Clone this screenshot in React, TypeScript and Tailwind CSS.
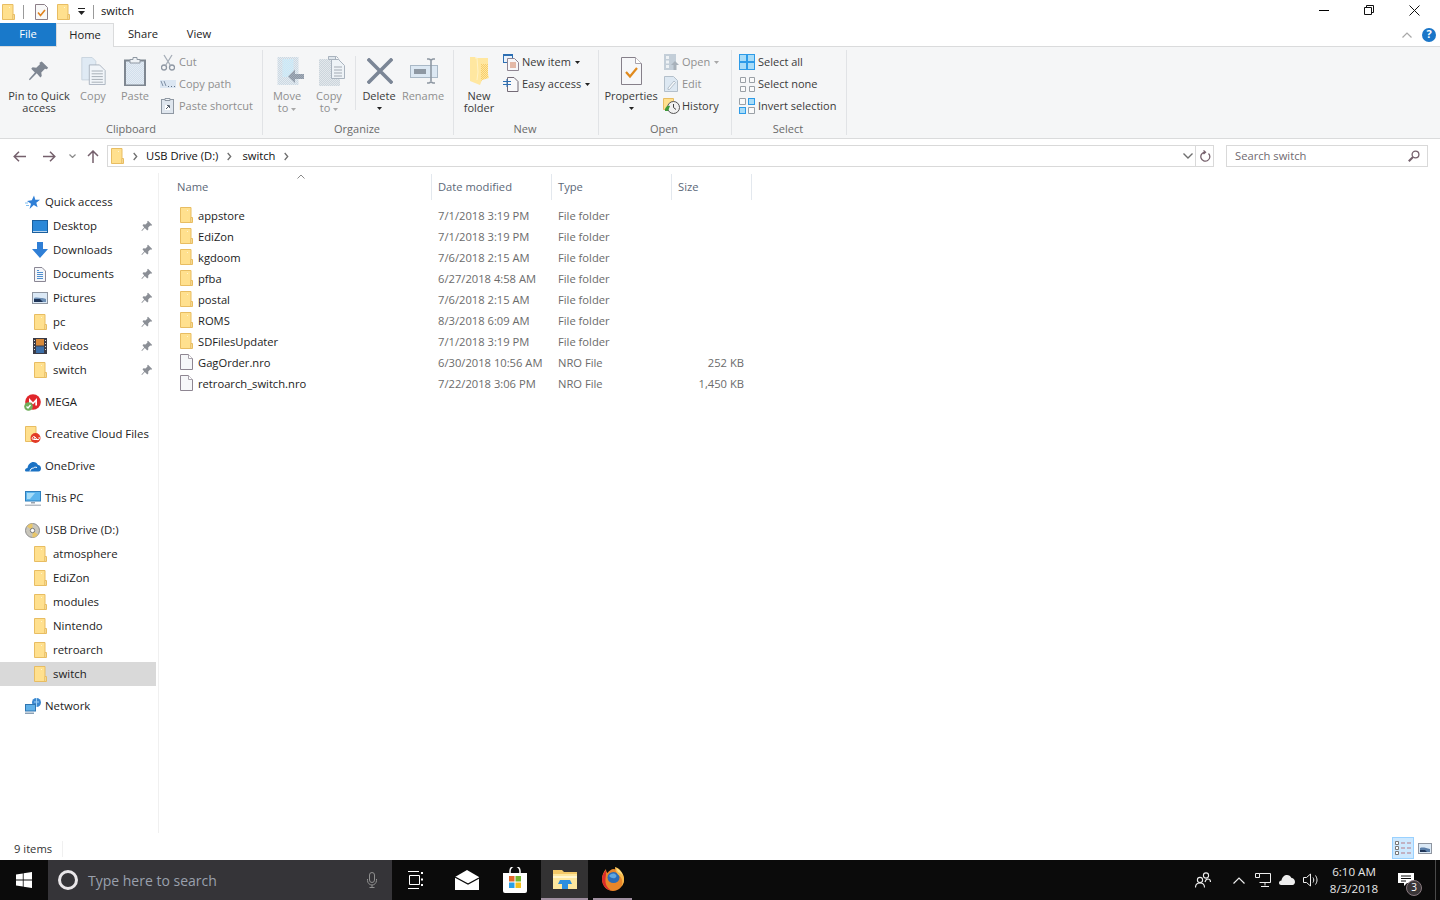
import React from "react";

type C = { children?: React.ReactNode };

function Folder() {
  return (
    <svg width="13" height="16" viewBox="0 0 13 16" className="shrink-0">
      <path d="M.5.500h10.500v15H.5z" fill="#ffe08e" stroke="#e8bd62" />
      <path d="M11 10.500h1.500v5H11z" fill="#fff0c0" stroke="#e8bd62" />
      <path d="M7 3h1v1H7z" fill="#fff4d0" />
    </svg>
  );
}
function FileIc() {
  return (
    <svg width="13" height="16" viewBox="0 0 13 16" className="shrink-0">
      <path d="M.5.500h8l4 4v11H.5z" fill="#f6f7f9" stroke="#8e8692" />
      <path d="M8.500.5v4h4" fill="#fff" stroke="#a8a3ac" />
    </svg>
  );
}
function PinSmall() {
  return (
    <svg width="12" height="12" viewBox="0 0 12 12">
      <path d="M7 .8 11.200 5l-1 .8-1-.3-2 2 .1 2-1 1L3.800 8 1 11l-.6-.5L3.200 7.600 1.500 5.200l1-1 2 .2 2-2-.3-1z" fill="#8b8f96" />
    </svg>
  );
}
function Star() {
  return (
    <svg width="15" height="15" viewBox="0 0 15 15">
      <path d="M9 .5l1.300 4.300H15l-3.700 2.900 1.300 4.500L8.800 10l-4.300 4 1.500-5.200L2 6l4.800-.8z" fill="#2f7fd6" />
      <path d="M0 8h3M1 10.500h3" stroke="#7fbdf0" />
    </svg>
  );
}
function Desktop() {
  return (
    <svg width="16" height="13" viewBox="0 0 16 13">
      <rect x=".5" y=".5" width="15" height="12" fill="#2b88d8" stroke="#1a5f9e" />
      <path d="M1 11h14v1H1z" fill="#bcd6ee" />
    </svg>
  );
}
function Downloads() {
  return (
    <svg width="16" height="16" viewBox="0 0 16 16">
      <path d="M5 0h6v7h5l-8 9-8-9h5z" fill="#2f7fd6" />
    </svg>
  );
}
function Documents() {
  return (
    <svg width="12" height="15" viewBox="0 0 12 15">
      <path d="M.5.500h7.500l3.500 3.500v10.500H.5z" fill="#f4f6f9" stroke="#8b8794" />
      <path d="M3 5.500h6M3 7.500h6M3 9.500h6M3 11.500h6" stroke="#4f8fd0" />
      <path d="M3 3h2v1H3z" fill="#4f8fd0" />
    </svg>
  );
}
function Pictures() {
  return (
    <svg width="16" height="12" viewBox="0 0 16 12">
      <rect x=".5" y=".5" width="15" height="11" fill="#dbe9f6" stroke="#8e95a0" />
      <path d="M2 6c3-1 5 0 7 0s3 0 5 1v3H2z" fill="#6d8fb5" />
      <path d="M2 7h6l3 3H2z" fill="#1f3558" />
    </svg>
  );
}
function Videos() {
  return (
    <svg width="14" height="16" viewBox="0 0 14 16">
      <rect width="14" height="16" fill="#3b3b46" />
      <path d="M3 1h8v6.500H3z" fill="#d88a3a" />
      <path d="M3 8.500h8V15H3z" fill="#3d6fa8" />
      <path d="M1 2h1v1H1zM1 5h1v1H1zM1 8h1v1H1zM1 11h1v1H1zM12 2h1v1h-1zM12 5h1v1h-1zM12 8h1v1h-1zM12 11h1v1h-1z" fill="#ddd" />
    </svg>
  );
}
function Mega() {
  return (
    <svg width="17" height="17" viewBox="0 0 17 17">
      <circle cx="9" cy="8" r="7.800" fill="#e0262b" />
      <path d="M5 11.500V4l4 4.200L13 4v7.500h-1.700V8L9 10.500 6.700 8v3.500z" fill="#fff" />
      <circle cx="4.500" cy="12.500" r="4.300" fill="#6fae5b" />
      <path d="M2.500 12.500l1.500 1.500 2.500-3" stroke="#fff" strokeWidth="1.300" fill="none" />
    </svg>
  );
}
function Cc() {
  return (
    <svg width="16" height="17" viewBox="0 0 16 17">
      <path d="M.5.500h10.500v15H.5z" fill="#ffe08e" stroke="#e8bd62" />
      <circle cx="10.500" cy="12" r="5" fill="#e23a26" />
      <path d="M7.500 13.500c-1-2 1-4 2.500-2.500l2 2.500c1.500 1 3-1 2-2.500M10 11l-1.500 2.500h5" stroke="#fff" fill="none" />
    </svg>
  );
}
function OneDrive() {
  return (
    <svg width="16" height="11" viewBox="0 0 16 11">
      <path d="M0 9.500C0 8 1 7 2.500 7 3 3.500 5.500 1 8.500 1c2 0 3.500 1 4.500 3 1.700 0 3 1.500 3 3.500 0 1.500-.8 3-2.500 3H1.500C.5 10.500 0 10 0 9.500z" fill="#1b72c4" />
      <path d="M5 10.500c0-2 1.500-3.500 3.500-3.500 1-1 2-1 3.500-.5" stroke="#fff" fill="none" />
    </svg>
  );
}
function ThisPc() {
  return (
    <svg width="16" height="15" viewBox="0 0 16 15">
      <rect x=".5" y=".5" width="15" height="9.500" fill="#5cb5ee" stroke="#2f7fbc" />
      <path d="M2 2h8L5 8H2z" fill="#a6dcf8" />
      <path d="M6 11h4v1.500H6z" fill="#9aa3ad" />
      <path d="M0 13.500h16V15H0z" fill="#b6bcc4" />
    </svg>
  );
}
function Usb() {
  return (
    <svg width="15" height="15" viewBox="0 0 15 15">
      <circle cx="7.500" cy="7.500" r="7" fill="#c9c6bb" stroke="#8d8d8d" />
      <path d="M7.500 7.500L2 3.500A7 7 0 0 1 7.500.5zM7.500 7.500l5.500 4A7 7 0 0 1 7.500 14.500z" fill="#e8c66a" />
      <circle cx="7.500" cy="7.500" r="2.200" fill="#fff" stroke="#777" />
    </svg>
  );
}
function Network() {
  return (
    <svg width="16" height="16" viewBox="0 0 16 16">
      <circle cx="11.500" cy="4.500" r="4.500" fill="#3a87cf" />
      <path d="M9 4h5M11.500 0v9" stroke="#9ed0f5" />
      <rect x=".5" y="6.500" width="10" height="6.500" fill="#5fb0e8" stroke="#2f75b0" />
      <path d="M0 14.500h9V16H0z" fill="#8aa0b5" />
    </svg>
  );
}

function Chev({ className }: { className?: string }) {
  return (
    <svg width="5" height="9" viewBox="0 0 5 9" className={className}>
      <path d="M.7 1l3 3.500-3 3.500" stroke="#6f6f6f" strokeWidth="1.300" fill="none" />
    </svg>
  );
}
function Caret({ gray }: { gray?: boolean }) {
  return (
    <svg width="5" height="3" viewBox="0 0 5 3" className="inline-block align-middle">
      <path d="M0 0h5L2.500 3z" fill={gray ? "#a8a8a8" : "#222"} />
    </svg>
  );
}

/* ribbon icons */
const Dither = ({ c1, c2, id }: { c1: string; c2: string; id: string }) => (
  <defs>
    <pattern id={id} width="2" height="2" patternUnits="userSpaceOnUse">
      <rect width="2" height="2" fill={c1} />
      <rect width="1" height="1" fill={c2} />
      <rect x="1" y="1" width="1" height="1" fill={c2} />
    </pattern>
  </defs>
);
function PinBig() {
  return (
    <svg width="22" height="22" viewBox="0 0 24 24">
      <path d="M15 1.500 22 8.500l-1.500 1.500-2-.5-4 4 .5 4-1.500 1.500-4-4.500L2 22l-1-1 6.500-7.500-4-4L5 8l4 .5 4-4-.5-1.500z" fill="#7e8692" />
    </svg>
  );
}
function CopyBig() {
  return (
    <svg width="25" height="28" viewBox="0 0 26 30">
      <path d="M.5.500h11l4 4v20H.5z" fill="#dfeaf4" stroke="#c6d2dd" />
      <path d="M8.500 8.500h11l6 6v15h-17z" fill="#f1f5f9" stroke="#a9b3be" />
      <path d="M11 15h12M11 18h12M11 21h12M11 24h12M11 27h12" stroke="#a3aab3" />
    </svg>
  );
}
function PasteBig() {
  return (
    <svg width="22" height="29" viewBox="0 0 22 29">
      <Dither id="pa" c1="#e4ecf4" c2="#d2dfec" />
      <rect x="1" y="3.500" width="20" height="25" fill="url(#pa)" stroke="#7f8791" strokeWidth="2" />
      <path d="M6 2.500h3V.5h4v2h3v3.500H6z" fill="#eef2f6" stroke="#8f98a3" />
    </svg>
  );
}
function Scissors() {
  return (
    <svg width="14" height="17" viewBox="0 0 14 17" className="ml-[1px]">
      <circle cx="3" cy="13.500" r="2.500" fill="none" stroke="#8e97a3" strokeWidth="1.300" />
      <circle cx="11" cy="13.500" r="2.500" fill="none" stroke="#8e97a3" strokeWidth="1.300" />
      <path d="M4.500 11.500 11 1M9.500 11.500 3 1" stroke="#a6aeb8" strokeWidth="1.300" />
    </svg>
  );
}
function CopyPath() {
  return (
    <svg width="16" height="8" viewBox="0 0 16 8">
      <rect width="16" height="8" fill="#dbe6f2" />
      <path d="M1 1l2 5M4 1l2 5" stroke="#7f90a6" />
      <path d="M8 6h1v1H8zM11 6h1v1h-1zM14 6h1v1h-1z" fill="#5f6f84" />
    </svg>
  );
}
function PasteShort() {
  return (
    <svg width="13" height="16" viewBox="0 0 13 16" className="ml-[1px]">
      <rect x=".5" y="1.500" width="12" height="14" fill="#dfe6ee" stroke="#8f98a3" />
      <path d="M4 .5h5v2H4z" fill="#eef2f6" stroke="#8f98a3" />
      <path d="M4 7h5v5H4z" fill="#fff" />
      <path d="M5 11l3-3M6 7.500h2.500V10" stroke="#56606c" fill="none" />
    </svg>
  );
}
function MoveTo() {
  return (
    <svg width="33" height="30" viewBox="0 0 33 30">
      <Dither id="mv" c1="#e3ebf1" c2="#ccd8e2" />
      <Dither id="mvc" c1="#c4e9fa" c2="#dbe8f0" />
      <Dither id="mva" c1="#8d98a6" c2="#a3adb9" />
      <rect x="6.500" y="1" width="21" height="28" fill="url(#mv)" />
      <rect x="11.500" y="3" width="11" height="18" fill="url(#mvc)" />
      <path d="M17 21.500 24 14.500v4.500h9v5h-9V28z" fill="url(#mva)" transform="translate(0 -1)" />
    </svg>
  );
}
function CopyTo() {
  return (
    <svg width="32" height="30" viewBox="0 0 32 30">
      <Dither id="ct" c1="#e3e8ec" c2="#ccd5dc" />
      <rect x="6" y="3" width="21" height="27" fill="url(#ct)" />
      <path d="M15.500.5h8l2 2" fill="none" stroke="#a9b3be" />
      <path d="M15.500.5h7v3H15.500z" fill="#dfe6ec" stroke="#a9b3be" />
      <path d="M18.500 3.500h7l6 6v13h-13z" fill="#eef3f7" stroke="#a9b3be" />
      <path d="M21 11h8M21 14h8M21 17h8M21 20h8" stroke="#a3aab3" />
    </svg>
  );
}
function DeleteIc() {
  return (
    <svg width="26" height="26" viewBox="0 0 26 26" className="ml-[1px]">
      <path d="M2 2l22 22M24 2 2 24" stroke="#7b8696" strokeWidth="3.600" strokeLinecap="square" />
    </svg>
  );
}
function RenameIc() {
  return (
    <svg width="28" height="26" viewBox="0 0 28 26" className="ml-[2px]">
      <rect x=".5" y="7.500" width="27" height="12" fill="#dce8f3" stroke="#a9b8c6" />
      <rect x="4" y="11" width="12" height="5" fill="#8e98a3" />
      <path d="M17 1h2l2 1 2-1h2M21 2v21M17 25h2l2-1 2 1h2" stroke="#8e98a3" strokeWidth="1.600" fill="none" />
    </svg>
  );
}
function NewFolderIc() {
  return (
    <svg width="19" height="28" viewBox="0 0 19 28">
      <Dither id="nf" c1="#ffe79f" c2="#f7cd6c" />
      <path d="M0 0h5l1 1h12v16l1 4-7 2-2 5L0 24z" fill="#ffe7a0" />
      <path d="M5 1h2l1 14-1 8" stroke="#fff3c8" fill="none" />
      <path d="M11 7h7v14l-6 2-1 1z" fill="url(#nf)" />
    </svg>
  );
}
function NewItem() {
  return (
    <svg width="16" height="17" viewBox="0 0 16 17">
      <rect x=".5" y=".5" width="9" height="8" fill="#eaf2fa" stroke="#2d6fb3" />
      <path d="M0 0h10v2H0z" fill="#2d6fb3" />
      <path d="M4.500 4.500h7l4 4v8h-11z" fill="#f7f7f9" stroke="#8f8592" />
      <path d="M7 9h6M7 11h6M7 13h6" stroke="#d07a55" />
    </svg>
  );
}
function EasyAccess() {
  return (
    <svg width="16" height="16" viewBox="0 0 16 16">
      <path d="M4.500 1.500h6.500l4 4v10H4.500z" fill="#f8f8fa" stroke="#736a76" />
      <path d="M0 5.500h8M0 8.500h8" stroke="#2d6fb3" />
      <path d="M4 3v8" stroke="#2d6fb3" />
    </svg>
  );
}
function Properties() {
  return (
    <svg width="21" height="28" viewBox="0 0 21 28">
      <path d="M.5.500h14l6 6v21H.5z" fill="#f6f7f9" stroke="#86808a" />
      <path d="M14.500.5v6h6" fill="#fff" stroke="#a8a3ac" />
      <path d="M5 15l4 4.500L16 11" stroke="#e08a1e" strokeWidth="2.200" fill="none" />
    </svg>
  );
}
function OpenIc() {
  return (
    <svg width="15" height="16" viewBox="0 0 15 16" className="ml-[1px]">
      <rect width="12" height="16" fill="#c3ced8" />
      <path d="M2 2h3v3H2zM2 6.500h3v3H2zM2 11h3v3H2z" fill="#eef2f5" />
      <path d="M11 7l4 4h-2.500v5h-3v-5H7z" fill="#a8b1ba" />
    </svg>
  );
}
function EditIc() {
  return (
    <svg width="14" height="16" viewBox="0 0 14 16" className="ml-[1px]">
      <path d="M.5.500h9l4 4v11H.5z" fill="#dde8f2" stroke="#b3bfca" />
      <path d="M4 12l6-7 1.500 1.500-6 7H4z" fill="#f6f9fb" stroke="#b3bfca" />
    </svg>
  );
}
function HistoryIc() {
  return (
    <svg width="17" height="16" viewBox="0 0 17 16">
      <path d="M.5.500h10v11H.5z" fill="#ffe08e" stroke="#e8bd62" />
      <circle cx="10.500" cy="9.500" r="6" fill="#f1f1f1" stroke="#555" />
      <path d="M10.500 6v3.500l2.500 2" stroke="#444" fill="none" />
      <path d="M2 11c1-3 3-4 5-3L5 13H2z" fill="#3f9a3a" />
    </svg>
  );
}
function SelectAll() {
  return (
    <svg width="16" height="16" viewBox="0 0 16 16">
      <rect width="16" height="16" fill="#2d9be8" />
      <path d="M1 1h6v6H1zM9 1h6v6H9zM1 9h6v6H1zM9 9h6v6H9z" fill="#a8dcf8" />
    </svg>
  );
}
function SelectNone() {
  return (
    <svg width="15" height="15" viewBox="0 0 15 15" fill="#fafafa" stroke="#9aa0a6" className="ml-[1px]">
      <path d="M.5.500h5v5h-5zM9.500.500h5v5h-5zM.5 9.500h5v5h-5zM9.500 9.500h5v5h-5z" />
    </svg>
  );
}
function Invert() {
  return (
    <svg width="16" height="16" viewBox="0 0 16 16">
      <path d="M.5.500h6v6h-6zM9.500 9.500h6v6h-6z" fill="#fafafa" stroke="#9aa0a6" />
      <path d="M9 0h7v7H9zM0 9h7v7H0z" fill="#2d9be8" />
      <path d="M10 1h5v5h-5zM1 10h5v5H1z" fill="#a8dcf8" />
    </svg>
  );
}

function Big({ w, icon, l1, l2, gray, caret, ml }: { w: string; icon: React.ReactNode; l1: string; l2?: React.ReactNode; gray?: boolean; caret?: boolean; ml?: string }) {
  return (
    <div className={`flex shrink-0 flex-col items-center pt-[5px] leading-[12px] ${w} ${ml ?? ""} ${gray ? "text-[#8f8f8f]" : "text-[#3a3a3a]"}`}>
      <div className="flex h-[32px] items-center justify-center">{icon}</div>
      <div className="mt-[3px] whitespace-nowrap">{l1}</div>
      {l2 !== undefined && <div className="whitespace-nowrap">{l2}</div>}
      {caret && (
        <div className="flex h-[12px] items-center">
          <Caret />
        </div>
      )}
    </div>
  );
}
function Small({ icon, label, gray, caret }: { icon: React.ReactNode; label: string; gray?: boolean; caret?: boolean }) {
  return (
    <div className={`flex h-[22px] items-center whitespace-nowrap ${gray ? "text-[#8f8f8f]" : "text-[#3a3a3a]"}`}>
      <div className="flex w-[19px] shrink-0 items-center">{icon}</div>
      <span>{label}</span>
      {caret && (
        <span className="ml-[4px] flex items-center">
          <Caret gray={gray} />
        </span>
      )}
    </div>
  );
}
function Col({ children, ml }: C & { ml: string }) {
  return <div className={`flex flex-col pt-[1px] ${ml}`}>{children}</div>;
}
function Group({ w, label, lc, children }: C & { w: string; label: string; lc?: string }) {
  return (
    <div className={`flex shrink-0 flex-col border-r border-[#e1e3e6] ${w}`}>
      <div className="flex h-[73px]">{children}</div>
      <div className={`text-center leading-[12px] text-[#6a6a6a] ${lc ?? ""}`}>{label}</div>
    </div>
  );
}

function NavRow({ icon, label, sub, pin, sel, mt }: { icon: React.ReactNode; label: string; sub?: boolean; pin?: boolean; sel?: boolean; mt?: boolean }) {
  return (
    <div className={`flex h-[24px] w-[156px] items-center whitespace-nowrap text-[#1c1c1c] ${sub ? "pl-[32px]" : "pl-[23px]"} ${sel ? "bg-[#d9d9d9]" : ""} ${mt ? "mt-[8px]" : ""}`}>
      <div className={`flex shrink-0 items-center justify-center ${sub ? "w-[21px] pr-[5px]" : "w-[22px] pr-[3px]"}`}>{icon}</div>
      <span className="flex-1">{label}</span>
      {pin && (
        <span className="mr-[3px] flex items-center">
          <PinSmall />
        </span>
      )}
    </div>
  );
}

const files = [
  ["appstore", "7/1/2018 3:19 PM", "File folder", ""],
  ["EdiZon", "7/1/2018 3:19 PM", "File folder", ""],
  ["kgdoom", "7/6/2018 2:15 AM", "File folder", ""],
  ["pfba", "6/27/2018 4:58 AM", "File folder", ""],
  ["postal", "7/6/2018 2:15 AM", "File folder", ""],
  ["ROMS", "8/3/2018 6:09 AM", "File folder", ""],
  ["SDFilesUpdater", "7/1/2018 3:19 PM", "File folder", ""],
  ["GagOrder.nro", "6/30/2018 10:56 AM", "NRO File", "252 KB"],
  ["retroarch_switch.nro", "7/22/2018 3:06 PM", "NRO File", "1,450 KB"],
];

function Tb({ children, w, bg, line, ml }: C & { w: string; bg?: string; line?: string; ml?: string }) {
  return (
    <div className={`flex h-full flex-col ${w} ${bg ?? ""} ${ml ?? ""}`}>
      <div className="flex flex-1 items-center justify-center">{children}</div>
      {line && <div className={`h-[2px] bg-[#a08fa0] ${line}`} />}
    </div>
  );
}

export default function App() {
  return (
    <div className="flex h-[900px] w-[1440px] flex-col overflow-hidden bg-white font-['Open_Sans',sans-serif] text-[11.2px] text-[#1c1c1c]">
      {/* title bar */}
      <div className="flex h-[23px] shrink-0 items-center">
        <div className="ml-[2px] flex items-center"><Folder /></div>
        <div className="ml-[8px] h-[14px] w-px bg-[#9a9a9a]" />
        <div className="ml-[11px] flex items-center">
          <svg width="13" height="16" viewBox="0 0 13 16">
            <path d="M.5.500h9l3 3v12H.5z" fill="#f8f8f8" stroke="#8c7f88" />
            <path d="M3 8.500l2.500 3L10 6" stroke="#e0821e" strokeWidth="1.600" fill="none" />
          </svg>
        </div>
        <div className="ml-[9px] flex items-center"><Folder /></div>
        <div className="ml-[8px] flex flex-col items-center">
          <div className="mb-[2px] h-px w-[7px] bg-[#222]" />
          <svg width="7" height="4" viewBox="0 0 7 4"><path d="M0 0h7L3.500 4z" fill="#222" /></svg>
        </div>
        <div className="ml-[8px] h-[14px] w-px bg-[#9a9a9a]" />
        <div className="ml-[7px] text-[#111]">switch</div>
        <div className="flex-1" />
        <div className="flex h-full w-[45px] items-center justify-center pb-[3px]"><div className="h-px w-[10px] bg-black" /></div>
        <div className="flex h-full w-[45px] items-center justify-center pb-[3px]">
          <svg width="10" height="10" viewBox="0 0 10 10" fill="none" stroke="#111">
            <path d="M.5 2.500h7v7h-7zM2.500 2.500v-2h7v7h-2" />
          </svg>
        </div>
        <div className="flex h-full w-[46px] items-center justify-center pb-[3px]">
          <svg width="11" height="11" viewBox="0 0 11 11" stroke="#111"><path d="M.5.500l10 10M10.500.5l-10 10" /></svg>
        </div>
        <div className="w-[3px]" />
      </div>
      {/* tabs */}
      <div className="flex h-[24px] shrink-0 items-start border-b border-[#dadbdc]">
        <div className="flex h-[23px] w-[56px] items-center justify-center bg-[#1979ca] text-white">File</div>
        <div className="z-10 flex h-[24px] w-[58px] items-center justify-center border-x border-t border-[#dadbdc] bg-[#f5f6f7] text-[#222]">Home</div>
        <div className="flex h-[23px] w-[58px] items-center justify-center text-[#222]">Share</div>
        <div className="flex h-[23px] w-[54px] items-center justify-center text-[#222]">View</div>
        <div className="flex-1" />
        <div className="flex h-[23px] items-center">
          <svg width="10" height="6" viewBox="0 0 10 6" fill="none" stroke="#a8a8a8" strokeWidth="1.200"><path d="M.5 5.500 5 1l4.500 4.500" /></svg>
          <div className="ml-[10px] mr-[4px] flex h-[14px] w-[14px] items-center justify-center rounded-full bg-[#1b76c8] text-[11px] font-bold text-white">?</div>
        </div>
      </div>
      {/* ribbon */}
      <div className="flex h-[92px] shrink-0 items-stretch border-b border-[#dadbdc] bg-[#f5f6f7] py-[3px] text-[11px]">
        <Group w="w-[263px]" label="Clipboard">
          <Big w="w-[78px]" icon={<PinBig />} l1="Pin to Quick" l2="access" />
          <Big w="w-[30px]" icon={<CopyBig />} l1="Copy" gray />
          <Big w="w-[42px]" ml="ml-[6px]" icon={<PasteBig />} l1="Paste" gray />
          <Col ml="ml-[4px]">
            <Small gray icon={<Scissors />} label="Cut" />
            <Small gray icon={<CopyPath />} label="Copy path" />
            <Small gray icon={<PasteShort />} label="Paste shortcut" />
          </Col>
        </Group>
        <Group w="w-[191px]" label="Organize" lc="pr-[2px]">
          <Big w="w-[36px]" ml="ml-[6px]" icon={<MoveTo />} l1="Move" l2={<>to <Caret gray /></>} gray />
          <Big w="w-[36px]" ml="ml-[6px]" icon={<CopyTo />} l1="Copy" l2={<>to <Caret gray /></>} gray />
          <div className="ml-[8px] mt-[6px] h-[54px] w-px bg-[#e1e3e6]" />
          <Big w="w-[40px]" ml="ml-[3px]" icon={<DeleteIc />} l1="Delete" caret />
          <Big w="w-[44px]" ml="ml-[2px]" icon={<RenameIc />} l1="Rename" gray />
        </Group>
        <Group w="w-[145px]" label="New" lc="pr-[2px]">
          <Big w="w-[36px]" ml="ml-[7px]" icon={<NewFolderIc />} l1="New" l2="folder" />
          <Col ml="ml-[6px]">
            <Small icon={<NewItem />} label="New item" caret />
            <Small icon={<EasyAccess />} label="Easy access" caret />
          </Col>
        </Group>
        <Group w="w-[133px]" label="Open" lc="pr-[2px]">
          <Big w="w-[54px]" ml="ml-[5px]" icon={<Properties />} l1="Properties" caret />
          <Col ml="ml-[5px]">
            <Small gray icon={<OpenIc />} label="Open" caret />
            <Small gray icon={<EditIc />} label="Edit" />
            <Small icon={<HistoryIc />} label="History" />
          </Col>
        </Group>
        <Group w="w-[115px]" label="Select" lc="pr-[2px]">
          <Col ml="ml-[7px]">
            <Small icon={<SelectAll />} label="Select all" />
            <Small icon={<SelectNone />} label="Select none" />
            <Small icon={<Invert />} label="Invert selection" />
          </Col>
        </Group>
      </div>
      {/* address */}
      <div className="flex h-[34px] shrink-0 items-center">
        <div className="flex w-[34px] items-center justify-center pl-[4px]">
          <svg width="13" height="11" viewBox="0 0 13 11" fill="none" stroke="#75606c" strokeWidth="1.500"><path d="M13 5.500H1.500M6 .7 1.200 5.500 6 10.300" /></svg>
        </div>
        <div className="flex w-[30px] items-center justify-center">
          <svg width="13" height="11" viewBox="0 0 13 11" fill="none" stroke="#75606c" strokeWidth="1.500"><path d="M0 5.500h11.500M7 .7l4.800 4.800L7 10.300" /></svg>
        </div>
        <div className="flex w-[16px] items-center justify-center">
          <svg width="7" height="4" viewBox="0 0 7 4" fill="none" stroke="#8a8a8a" strokeWidth="1.200"><path d="M.5.500l3 3 3-3" /></svg>
        </div>
        <div className="flex w-[26px] items-center justify-center">
          <svg width="12" height="13" viewBox="0 0 12 13" fill="none" stroke="#75606c" strokeWidth="1.500"><path d="M6 13V1.500M1 6l5-5 5 5" /></svg>
        </div>
        <div className="ml-[1px] flex h-[22px] flex-1 items-center border border-[#d9d9d9] pl-[3px]">
          <Folder />
          <Chev className="ml-[9px]" />
          <span className="ml-[8px] text-[#111]">USB Drive (D:)</span>
          <Chev className="ml-[9px]" />
          <span className="ml-[10px] text-[#111]">switch</span>
          <Chev className="ml-[9px]" />
          <div className="flex-1" />
          <svg width="10" height="6" viewBox="0 0 10 6" fill="none" stroke="#6f6f6f" strokeWidth="1.400"><path d="M.5.500l4.500 4.500 4.500-4.500" /></svg>
          <div className="ml-[2px] h-full w-px bg-[#d9d9d9]" />
          <div className="flex w-[17px] items-center justify-center pl-[1px]">
            <svg width="11" height="12" viewBox="0 0 11 12" fill="none" stroke="#75606c" strokeWidth="1.300"><path d="M5 2.200a4.500 4.500 0 1 0 3.500 1.300M3.500.5 5.500 2.200 3.500 4" /></svg>
          </div>
        </div>
        <div className="ml-[12px] mr-[12px] flex h-[22px] w-[202px] items-center justify-between border border-[#d9d9d9] pl-[8px] pr-[7px] text-[#6f6a70]">
          <span>Search switch</span>
          <svg width="12" height="12" viewBox="0 0 12 12" fill="none" stroke="#75606c"><circle cx="7.500" cy="4.500" r="3.400" strokeWidth="1.300" /><path d="M5 7 .8 11.200" strokeWidth="2" /></svg>
        </div>
      </div>
      {/* main */}
      <div className="flex min-h-0 flex-1">
        <div className="mb-[5px] flex w-[159px] shrink-0 flex-col border-r border-[#f0f0f0] pt-[17px] text-[11.4px]">
          <NavRow icon={<Star />} label="Quick access" />
          <NavRow sub icon={<Desktop />} label="Desktop" pin />
          <NavRow sub icon={<Downloads />} label="Downloads" pin />
          <NavRow sub icon={<Documents />} label="Documents" pin />
          <NavRow sub icon={<Pictures />} label="Pictures" pin />
          <NavRow sub icon={<Folder />} label="pc" pin />
          <NavRow sub icon={<Videos />} label="Videos" pin />
          <NavRow sub icon={<Folder />} label="switch" pin />
          <NavRow mt icon={<Mega />} label="MEGA" />
          <NavRow mt icon={<Cc />} label="Creative Cloud Files" />
          <NavRow mt icon={<OneDrive />} label="OneDrive" />
          <NavRow mt icon={<ThisPc />} label="This PC" />
          <NavRow mt icon={<Usb />} label="USB Drive (D:)" />
          <NavRow sub icon={<Folder />} label="atmosphere" />
          <NavRow sub icon={<Folder />} label="EdiZon" />
          <NavRow sub icon={<Folder />} label="modules" />
          <NavRow sub icon={<Folder />} label="Nintendo" />
          <NavRow sub icon={<Folder />} label="retroarch" />
          <NavRow sub sel icon={<Folder />} label="switch" />
          <NavRow mt icon={<Network />} label="Network" />
        </div>
        <div className="flex-1 pl-px pt-px">
          <div className="relative grid h-[26px] grid-cols-[272px_120px_120px_80px] text-[#5c6878]">
            <div className="flex items-center border-r border-[#e3e8ee] pl-[17px]">Name</div>
            <div className="flex items-center border-r border-[#e3e8ee] pl-[6px]">Date modified</div>
            <div className="flex items-center border-r border-[#e3e8ee] pl-[6px]">Type</div>
            <div className="flex items-center border-r border-[#e3e8ee] pl-[6px]">Size</div>
            <svg width="8" height="5" viewBox="0 0 8 5" fill="none" stroke="#8a8a8a" className="absolute left-[137px] top-0"><path d="M.5 4.500 4 1l3.500 3.500" /></svg>
          </div>
          <div className="mt-[5px]">
            {files.map((f) => (
              <div key={f[0]} className="grid h-[21px] grid-cols-[272px_120px_120px_80px] items-center text-[#6b6b6b]">
                <div className="flex items-center pl-[20px] text-[#1c1c1c]">
                  <div className="flex w-[18px] shrink-0 items-center">{f[3] ? <FileIc /> : <Folder />}</div>
                  <span className="whitespace-nowrap pt-[2px]">{f[0]}</span>
                </div>
                <div className="whitespace-nowrap pl-[6px] pt-[2px]">{f[1]}</div>
                <div className="whitespace-nowrap pl-[6px] pt-[2px]">{f[2]}</div>
                <div className="whitespace-nowrap pr-[8px] pt-[2px] text-right">{f[3]}</div>
              </div>
            ))}
          </div>
        </div>
      </div>
      {/* status */}
      <div className="flex h-[22px] shrink-0 items-center">
        <div className="flex h-[16px] w-[63px] items-center border-r border-[#f0f0f0] pl-[14px] text-[#333]">9 items</div>
        <div className="flex-1" />
        <div className="-mt-px mb-px flex h-full w-[22px] items-center justify-center border border-[#99d1ff] bg-[#cce8ff]">
          <svg width="16" height="14" viewBox="0 0 16 14">
            <path d="M.5.500h3v3h-3zM.5 5.500h3v3h-3zM.5 10.500h3v3h-3z" fill="#fff" stroke="#777" />
            <path d="M6 2h4M12 2h4M6 7h4M12 7h4M6 12h4M12 12h4" stroke="#b77a86" />
          </svg>
        </div>
        <div className="ml-[4px] mr-[8px] flex w-[14px] items-center justify-center pb-[2px]">
          <svg width="14" height="11" viewBox="0 0 14 11">
            <rect x=".5" y=".5" width="13" height="10" fill="#dbe9f6" stroke="#8e95a0" />
            <path d="M2 5c3-1 6 0 10 1v3H2z" fill="#5a7ea8" />
            <path d="M2 7h5l2 2H2z" fill="#1f3558" />
          </svg>
        </div>
      </div>
      {/* taskbar */}
      <div className="flex h-[40px] shrink-0 items-center bg-[#0b0b0b] text-[#e8e8e8]">
        <Tb w="w-[48px]">
          <svg width="16" height="16" viewBox="0 0 16 16" fill="#fff"><path d="M0 2.400 6.800 1.400V7.600H0zM7.600 1.300 16 0v7.600H7.600zM0 8.400h6.800v6.200L0 13.600zM7.600 8.400H16V16l-8.400-1.300z" /></svg>
        </Tb>
        <div className="flex h-full w-[344px] items-center bg-[#353438] pl-[10px] pr-[15px]">
          <div className="h-[20px] w-[20px] rounded-full border-[3px] border-[#e9e6e9]" />
          <span className="ml-[10px] flex-1 text-[14px] text-[#9aa0ad]">Type here to search</span>
          <svg width="10" height="16" viewBox="0 0 10 16" fill="none" stroke="#8f8f8f"><rect x="2.500" y=".5" width="5" height="10" rx="2.500" /><path d="M.5 7v1.500a4.500 4.500 0 0 0 9 0V7M5 13v3M2.500 15.500h5" /></svg>
        </div>
        <Tb w="w-[48px]">
          <svg width="16" height="18" viewBox="0 0 16 18" fill="none" stroke="#fff"><path d="M0 .5h11M0 17.500h11M1.500 4.500h10v9h-10z" /><path d="M14 1v2M14 7.500v2M14 13v2" strokeWidth="2" /></svg>
        </Tb>
        <Tb w="w-[48px]" ml="ml-[3px]">
          <svg width="24" height="20" viewBox="0 0 24 20"><path d="M0 7 12 0l12 7v13H0z" fill="#fff" /><path d="M0 7l13 7 11-6" stroke="#0b0b0b" fill="none" strokeWidth="1.200" /></svg>
        </Tb>
        <Tb w="w-[48px]">
          <svg width="24" height="26" viewBox="0 0 24 26">
            <path d="M7 8V4a5 5 0 0 1 10 0v4" fill="none" stroke="#fff" strokeWidth="1.500" />
            <path d="M0 6h24v18a2 2 0 0 1-2 2H2a2 2 0 0 1-2-2z" fill="#fff" />
            <path d="M6 9h5.500v5.500H6z" fill="#e2672a" />
            <path d="M12.500 9H18v5.500h-5.500z" fill="#75b52d" />
            <path d="M6 15.500h5.500V21H6z" fill="#2aa0ea" />
            <path d="M12.500 15.500H18V21h-5.500z" fill="#f4c01f" />
          </svg>
        </Tb>
        <Tb w="w-[47px]" ml="ml-[2px]" bg="bg-[#333233]" line="w-full">
          <svg width="24" height="20" viewBox="0 0 24 20">
            <path d="M0 1h9l2 2h13v17H0z" fill="#f3c969" />
            <path d="M0 5h24v15H0z" fill="#fde79e" />
            <path d="M0 7h24v2H0z" fill="#fff6cf" />
            <path d="M7 11h10l2 4H5zM9 15h6v5H9z" fill="#2a8ee0" />
          </svg>
        </Tb>
        <Tb w="w-[49px]" line="mx-[5px]">
          <svg width="22" height="24" viewBox="0 0 22 24">
            <path d="M11 2c6 0 11 4.500 11 10.500S17 24 11 24 0 19 0 12C0 8 1.500 5 4 2c0 2 .5 3 1.500 4C7 4 9 2.500 11 2z" fill="#e8862a" />
            <path d="M4 3C1.500 6 0 9 0 12c0 6 4 10.500 9 11.500C5 21 3 17 3.500 12 3.700 9 4.500 6 4 3z" fill="#dc2c2a" />
            <ellipse cx="11.500" cy="10.500" rx="6" ry="5.500" fill="#2b6cb8" />
            <path d="M7 9c1-2 4-3 6-2 2 1 2 3 0 4-2 .5-4 0-6-2z" fill="#5fa6e0" />
            <path d="M13 0c4 1 8 5 9 11 .5 3-.5 6-2.500 8.500 1.500-4 1-8-2-10.500-2-1.800-4.500-5-4.500-9z" fill="#f6b94a" />
            <path d="M14 1c3 1 6 4 7 8-1-2-3-3-5-4z" fill="#f8dc8a" />
          </svg>
        </Tb>
        <div className="flex-1" />
        <Tb w="w-[36px]">
          <svg width="16" height="16" viewBox="0 0 16 16" fill="none" stroke="#eee" strokeWidth="1.100"><circle cx="5" cy="8" r="2.600" /><path d="M.5 15.500c0-3 2-4.500 4.500-4.500s4.500 1.500 4.500 4.500" /><circle cx="11" cy="3.500" r="2.600" /><path d="M10 10c.5-2 1.500-3 3-3 1.500 0 2.500 1 2.500 3" /></svg>
        </Tb>
        <Tb w="w-[24px]" ml="ml-[6px]">
          <svg width="12" height="7" viewBox="0 0 12 7" fill="none" stroke="#eee" strokeWidth="1.200"><path d="M.5 6.500 6 1l5.500 5.500" /></svg>
        </Tb>
        <Tb w="w-[24px]">
          <svg width="16" height="14" viewBox="0 0 16 14" fill="none" stroke="#eee"><path d="M4.500.5h11v9h-11M10 9.500v3M6 13.500h8" /><path d="M.5.500h4v4h-4z" /></svg>
        </Tb>
        <Tb w="w-[24px]">
          <svg width="16" height="10" viewBox="0 0 16 10" fill="#eee"><path d="M0 8c0-1.500 1-2.500 2.500-2.500C3 2 5.500 0 8 0c2 0 3.500 1 4.500 3C14.500 3 16 5 16 7c0 1.500-1 3-2.500 3H2C1 10 0 9 0 8z" /></svg>
        </Tb>
        <Tb w="w-[24px]">
          <svg width="16" height="14" viewBox="0 0 16 14" fill="none" stroke="#eee"><path d="M.5 4.500h3L7.500 1v12L3.500 9.500h-3z" /><path d="M10 4.500c1 1.500 1 3.500 0 5M12.500 2.500c2 3 2 6 0 9" /></svg>
        </Tb>
        <div className="flex w-[62px] flex-col items-center text-[11.6px] leading-[17px]">
          <div>6:10 AM</div>
          <div>8/3/2018</div>
        </div>
        <Tb w="w-[46px]">
          <div className="relative mr-[4px] h-[15px] w-[16px]">
            <svg width="16" height="14" viewBox="0 0 16 14"><path d="M0 0h16v10H9l-3 3v-3H0z" fill="#fff" /><path d="M3 3h10M3 5.500h10M3 8h5" stroke="#0b0b0b" /></svg>
            <div className="absolute left-[8px] top-[7px] flex h-[16px] w-[16px] items-center justify-center rounded-full border border-[#8a7a80] bg-[#3a3638] text-[10px] text-white">3</div>
          </div>
        </Tb>
        <div className="ml-[4px] h-full w-[5px] shrink-0 border-l border-[#4a4a4a]" />
      </div>
    </div>
  );
}
